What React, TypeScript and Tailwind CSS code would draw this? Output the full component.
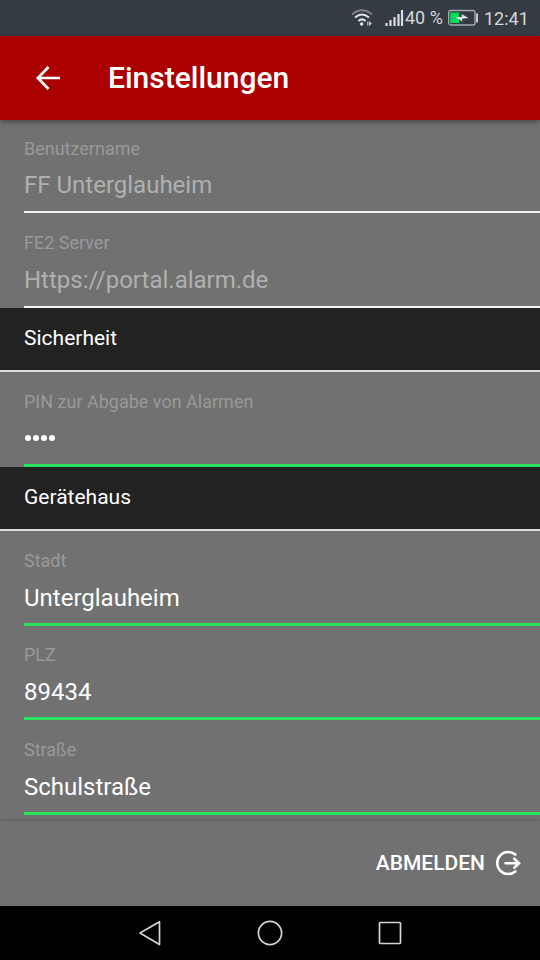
import React from "react";

type FieldProps = {
  label: string;
  value: string;
  height: string;
  pad?: string;
  gap?: string;
  disabled?: boolean;
  password?: boolean;
};

function Field({ label, value, height, pad = "pt-[20px]", gap = "mt-[12px]", disabled, password }: FieldProps) {
  return (
    <div className={`ml-6 flex shrink-0 flex-col ${height} ${pad} ${disabled ? "border-b-2 border-[#f2f2f2]" : "border-b-3 border-[#2ae25e]"}`}>
      <label className="text-[18px] leading-[20px] text-[#999999]">{label}</label>
      {password ? (
        <div className="mt-[23px] flex gap-[2px] pl-px" aria-label={value}>
          {[0, 1, 2, 3].map((i) => (
            <span key={i} className="h-[6px] w-[6px] rounded-full bg-white" />
          ))}
        </div>
      ) : (
        <div className={`text-[24px] leading-[30px] ${gap} ${disabled ? "text-[#b0b0b0]" : "text-white"}`}>{value}</div>
      )}
    </div>
  );
}

function Section({ title, height }: { title: string; height: string }) {
  return (
    <h2 className={`flex shrink-0 items-center border-b-2 border-[#dedede] bg-[#222222] pl-6 pb-[1px] text-[21px] leading-[26px] text-white ${height}`}>
      {title}
    </h2>
  );
}

function StatusBar() {
  return (
    <div className="flex h-9 shrink-0 items-center bg-[#343b43] pl-[350px] text-[18px] text-[#d5d7d9]">
      <svg width="55" height="36" viewBox="0 0 55 36" className="shrink-0" fill="none">
        <path d="M2 14.500Q12 6 22 14.500" stroke="#7e8388" strokeWidth="1.800" />
        <path d="M5 17.500Q12 11.500 19 17.500M8.500 21Q12 17.800 15.500 21" stroke="#e1e3e4" strokeWidth="2.100" />
        <circle cx="11.700" cy="24" r="1.800" fill="#e1e3e4" />
        <path d="M17.500 21.500v4M19 21.500l2.500 2-2.500 2z" stroke="#c5c8ca" strokeWidth=".8" fill="#c5c8ca" />
        <path d="M36.500 23v3M40.500 20v6M44.500 17v9M48.500 14v12M52 10v16" stroke="#dadcdd" strokeWidth="2.200" />
      </svg>
      <span className="w-[43px] shrink-0 pb-[2px] whitespace-nowrap">40 %</span>
      <svg width="36" height="36" viewBox="0 0 36 36" className="shrink-0" fill="none">
        <rect x=".7" y="10.500" width="26.300" height="14.500" rx="2" stroke="#a5a9ac" strokeWidth="1.300" />
        <path d="M2.200 12.500h9v10.500h-9z" fill="#00dc5a" />
        <path d="M7.500 17.600l6.500-.8-.5-2.800 7 4-6.500.8.5 2.800z" fill="#e1e3e4" />
        <path d="M29 13.500v9" stroke="#c5c8ca" strokeWidth="2" />
      </svg>
      <span className="shrink-0">12:41</span>
    </div>
  );
}

export default function App() {
  return (
    <div className="flex h-[960px] w-[540px] flex-col overflow-hidden bg-[#717171] font-[Roboto,sans-serif]">
      <StatusBar />
      <header className="z-10 flex h-[84px] shrink-0 items-center bg-[#aa0000] pl-9 text-white shadow-[0_3px_5px_-1px_rgba(0,0,0,0.35)]">
        <svg width="25" height="26" viewBox="0 0 25 26" fill="none" stroke="currentColor" strokeWidth="2.700">
          <path d="M12.500 2 1.900 13 12.500 24M2 13h22" />
        </svg>
        <h1 className="ml-[47px] text-[30px] leading-9 font-medium">Einstellungen</h1>
      </header>
      <main className="flex h-[701px] shrink-0 flex-col overflow-hidden">
        <Field label="Benutzername" value="FF Unterglauheim" height="h-[93px]" pad="pt-[18.500px]" gap="mt-[11px]" disabled />
        <Field label="FE2 Server" value="Https://portal.alarm.de" height="h-[94.500px]" disabled />
        <Section title="Sicherheit" height="h-[64.500px]" />
        <Field label="PIN zur Abgabe von Alarmen" value="••••" height="h-[94.500px]" password />
        <Section title="Gerätehaus" height="h-[64.500px]" />
        <Field label="Stadt" value="Unterglauheim" height="h-[94.500px]" />
        <Field label="PLZ" value="89434" height="h-[94.500px]" pad="pt-[19px]" />
        <Field label="Straße" value="Schulstraße" height="h-[94.500px]" />
      </main>
      <footer className="flex h-[85px] shrink-0 items-center justify-end pr-[19px] pb-[2px] text-white shadow-[0_-1px_3px_rgba(0,0,0,0.18)]">
        <button className="flex items-center gap-[11px] text-[21px] leading-6 font-medium">
          ABMELDEN
          <svg width="25" height="26" viewBox="0 0 25 26" fill="none" stroke="currentColor" strokeWidth="2.600" strokeLinecap="round">
            <path d="M19.300 4.600A11 11 0 1 0 19.300 21.400M9.500 13.200H23M18.300 8.700l4.700 4.500-4.700 4.500" />
          </svg>
        </button>
      </footer>
      <nav className="flex h-[54px] shrink-0 items-center justify-between bg-black pr-[137px] pl-[138px]">
        <svg width="24" height="26" viewBox="0 0 24 26" fill="none" stroke="#d4d4d4" strokeWidth="1.700" strokeLinejoin="round">
          <path d="M21.500 1.700v22.800L2 13z" />
        </svg>
        <svg width="26" height="26" viewBox="0 0 26 26" fill="none" stroke="#d4d4d4" strokeWidth="1.700">
          <circle cx="13" cy="13" r="11.600" />
        </svg>
        <svg width="26" height="26" viewBox="0 0 26 26" fill="none" stroke="#d4d4d4" strokeWidth="1.700">
          <rect x="2.500" y="2.500" width="21" height="21" rx="1" />
        </svg>
      </nav>
    </div>
  );
}
